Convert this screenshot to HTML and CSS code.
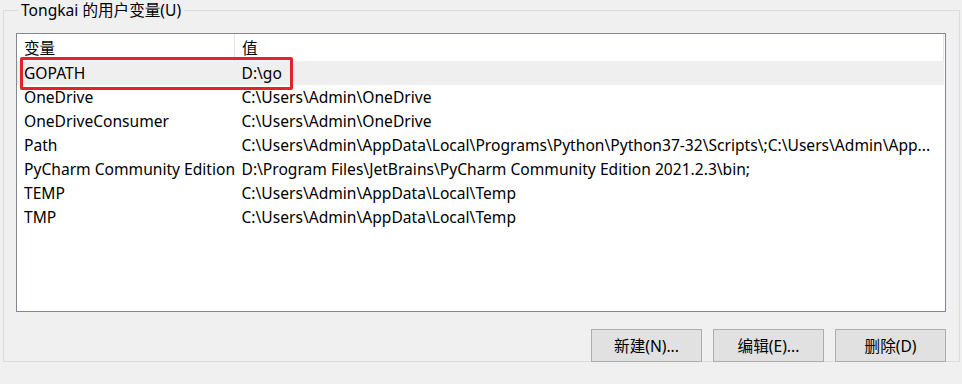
FILE: index.html
```html
<!DOCTYPE html>
<html lang="zh-CN">
<head>
  <meta charset="UTF-8">
  <title>用户变量</title>
  <link rel="stylesheet" href="styles.css">
</head>
<body>

  <fieldset class="grupo">
    <legend class="grupo-titulo">Tongkai 的用户变量(U)</legend>

    <div class="lista">
      <table class="tabela">
        <thead>
          <tr>
            <th class="col-nome">变量</th>
            <th class="col-valor">值</th>
          </tr>
        </thead>
        <tbody>
          <tr class="selecionado">
            <td>GOPATH</td>
            <td>D:\go</td>
          </tr>
          <tr>
            <td>OneDrive</td>
            <td>C:\Users\Admin\OneDrive</td>
          </tr>
          <tr>
            <td>OneDriveConsumer</td>
            <td>C:\Users\Admin\OneDrive</td>
          </tr>
          <tr>
            <td>Path</td>
            <td>C:\Users\Admin\AppData\Local\Programs\Python\Python37-32\Scripts\;C:\Users\Admin\App...</td>
          </tr>
          <tr>
            <td>PyCharm Community Edition</td>
            <td>D:\Program Files\JetBrains\PyCharm Community Edition 2021.2.3\bin;</td>
          </tr>
          <tr>
            <td>TEMP</td>
            <td>C:\Users\Admin\AppData\Local\Temp</td>
          </tr>
          <tr>
            <td>TMP</td>
            <td>C:\Users\Admin\AppData\Local\Temp</td>
          </tr>
        </tbody>
      </table>

      <!-- destaque vermelho em volta da linha GOPATH -->
      <div class="destaque"></div>
    </div>

    <div class="botoes">
      <button class="botao">新建(N)...</button>
      <button class="botao">编辑(E)...</button>
      <button class="botao">删除(D)</button>
    </div>
  </fieldset>

</body>
</html>
```

FILE: styles.css
```css
body {
  margin: 0;
  padding: 0;
  background-color: #f0f0f0;
  font-family: "Noto Sans", "Noto Sans CJK SC", sans-serif;
  font-size: 15.6px;
  color: #000;
}

.grupo {
  margin: 0 2px 2px 3px;
  padding: 13px 13px 18px 12px;
  border: 1px solid #dcdcdc;
  height: 329px;
}

.grupo-titulo {
  margin-left: 2px;
  padding: 0 3px;
  line-height: 20px;
}

.lista {
  position: relative;
  height: 277px;
  background-color: #fff;
  border: 1px solid #828790;
  overflow: hidden;
}

.tabela {
  width: 927px;
  border-collapse: collapse;
  table-layout: fixed;
}

.tabela th {
  height: 27px;
  font-weight: normal;
  text-align: left;
  padding: 0 0 0 7px;
  border-right: 1px solid #e5e5e5;
}

.tabela th.col-nome {
  width: 210px;
}

.tabela td {
  height: 24px;
  padding: 0 0 0 7px;
  white-space: nowrap;
  overflow: hidden;
}

.tabela tr.selecionado td {
  background-color: #efefef;
}

.destaque {
  position: absolute;
  left: 3px;
  top: 23px;
  width: 267px;
  height: 27px;
  border: 3px solid #e0232e;
  border-radius: 2px;
}

.botoes {
  display: flex;
  justify-content: flex-end;
  gap: 11px;
  margin-top: 17px;
}

.botao {
  width: 111px;
  height: 33px;
  background-color: #e1e1e1;
  border: 1px solid #adadad;
  font-family: inherit;
  font-size: 15.6px;
  color: #000;
  padding: 0;
}
```
